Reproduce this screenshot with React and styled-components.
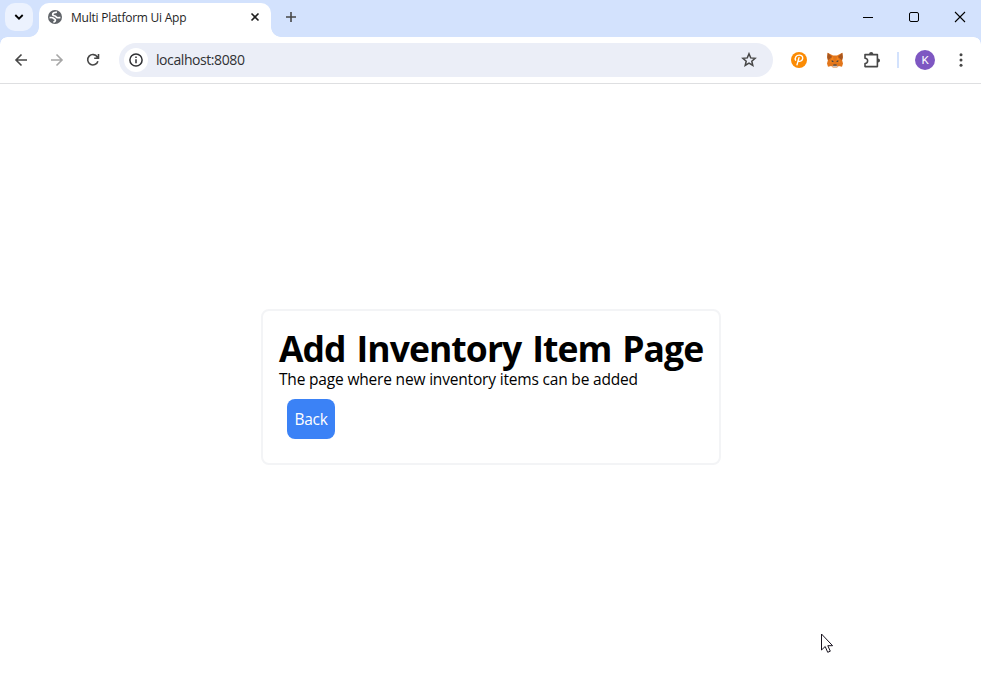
import React from 'react';
import styled, { createGlobalStyle } from 'styled-components';

const GlobalStyle = createGlobalStyle`
  * { box-sizing: border-box; }
  body { margin: 0; background: #fff; overflow: hidden; }
  button { border: 0; padding: 0; background: none; font: inherit; color: inherit; }
  svg { display: block; flex: none; }
`;

const Window = styled.div`
  position: relative;
  display: flex;
  flex-direction: column;
  width: 981px;
  height: 687px;
  background: #fff;
  font-family: "Open Sans", "Noto Sans", sans-serif;
`;

const TabStrip = styled.header`
  display: flex;
  height: 37px;
  flex: none;
  background: #d3e2fd;
`;

const SearchCorner = styled.div`
  width: 39px;
  height: 37px;
  padding: 3px 0 0 5px;
`;

const TabSearch = styled.button`
  display: grid;
  place-items: center;
  width: 28px;
  height: 28px;
  border-radius: 10px;
  background: #ecf2fe;
`;

const Tab = styled.div`
  position: relative;
  display: flex;
  align-items: center;
  width: 232px;
  height: 34px;
  margin-top: 3px;
  padding: 0 10px 6px 9px;
  border-radius: 10px 10px 0 0;
  background: #fff;

  &::before,
  &::after {
    content: "";
    position: absolute;
    bottom: 0;
    width: 10px;
    height: 10px;
  }
  &::before {
    left: -10px;
    background: radial-gradient(circle at 0 0, transparent 9.5px, #fff 10.2px);
  }
  &::after {
    right: -10px;
    background: radial-gradient(circle at 100% 0, transparent 9.5px, #fff 10.2px);
  }
`;

const TabTitle = styled.span`
  flex: 1;
  margin: 2px 0 0 9px;
  font-size: 12px;
  line-height: 16px;
  letter-spacing: -0.24px;
  white-space: nowrap;
  color: #1f1f1f;
`;

const NewTab = styled.button`
  width: 12px;
  height: 12px;
  margin: 11px 0 0 14px;
`;

const WindowButtons = styled.div`
  display: flex;
  gap: 34px;
  height: 12px;
  margin: 11px 15px 0 auto;
`;

const Toolbar = styled.div`
  position: relative;
  display: flex;
  align-items: center;
  height: 47px;
  flex: none;
  padding: 0 12px 0 13px;
  border-bottom: 1px solid #dedfe1;

  &::before,
  &::after {
    content: "";
    position: absolute;
    top: 0;
    width: 7px;
    height: 7px;
  }
  &::before {
    left: 0;
    background: radial-gradient(circle at 100% 100%, transparent 6.4px, #d3e2fd 7px);
  }
  &::after {
    right: 0;
    background: radial-gradient(circle at 0 100%, transparent 6.4px, #d3e2fd 7px);
  }
`;

const Navigation = styled.nav`
  display: flex;
  gap: 20px;
  color: #474747;
`;

const ToolButton = styled.button`
  display: block;
  width: 16px;
  height: 16px;
  color: ${({ $muted }) => ($muted ? '#a6a6a6' : '#474747')};
`;

const AddressBar = styled.div`
  display: flex;
  align-items: center;
  flex: none;
  width: 654px;
  height: 34px;
  margin-left: 18px;
  padding: 0 16px 0 5px;
  border-radius: 17px;
  background: #ebeef7;
  color: #303134;
`;

const SiteInfo = styled.span`
  display: grid;
  place-items: center;
  width: 24px;
  height: 24px;
  border-radius: 50%;
  background: #fff;
`;

const Address = styled.span`
  flex: 1;
  margin-left: 8px;
  font-size: 14px;
  line-height: 20px;
  letter-spacing: -0.42px;
`;

const Extensions = styled.div`
  display: flex;
  align-items: center;
  gap: 20px;
  margin-left: 18px;
`;

const Divider = styled.span`
  flex: none;
  width: 2px;
  height: 16px;
  margin-left: 16px;
  background: #d3e2fd;
`;

const Avatar = styled.span`
  display: grid;
  place-items: center;
  flex: none;
  width: 20px;
  height: 20px;
  margin: 0 18px 0 16px;
  border-radius: 50%;
  background: #7e57c2;
  color: #fff;
  font: 11.5px/20px Roboto, sans-serif;
`;

const Page = styled.main`
  display: flex;
  flex: 1;
  align-items: center;
  justify-content: center;
  padding-top: 3px;
`;

const Card = styled.section`
  width: 460px;
  height: 156px;
  padding: 16px;
  border: 2px solid #f3f4f6;
  border-radius: 8px;
  color: #000;
`;

const Heading = styled.h1`
  height: 40px;
  margin: 0;
  padding-left: 0.5px;
  font-size: 35.5px;
  line-height: 43px;
  font-weight: 700;
  letter-spacing: -0.93px;
  word-spacing: 2.5px;
  white-space: nowrap;
`;

const Description = styled.p`
  margin: 0;
  padding-left: 0.5px;
  font-size: 15.5px;
  line-height: 24px;
  letter-spacing: -0.18px;
  white-space: nowrap;
`;

const BackButton = styled.button`
  display: block;
  width: 48px;
  height: 40px;
  margin: 8px;
  padding-left: 1px;
  border-radius: 8px;
  background: #3b82f6;
  color: #fff;
  font-size: 15.5px;
  line-height: 24px;
  letter-spacing: -0.3px;
  text-align: center;
`;

const Cursor = styled.svg`
  position: absolute;
  left: 821px;
  top: 633px;
`;

const Stroke = ({ d, size = 16, width = 1.6, ...rest }) => (
  <svg width={size} height={size} viewBox={`0 0 ${size} ${size}`} fill="none" stroke="currentColor" strokeWidth={width} {...rest}>
    <path d={d} />
  </svg>
);

const GlobeIcon = () => (
  <svg width="14" height="14" viewBox="0 0 14 14">
    <circle cx="7" cy="7" r="7" fill="#5f6368" />
    <path
      d="M8.9 2.2C6.6 2.4 4.6 3.2 4.7 4.6c.1 1.2 1.5 1 2.5 1.4 1.2.5 1 1.5 2.2 1.7 1.1.2 1.9-.2 3-.1M1.6 7.6c1.5-.2 3.3-.1 4.1.8.7.8 1.6.6 1.7 1.5.1 1-.8 1.9-2 2.2"
      fill="none"
      stroke="#fff"
      strokeWidth="1.7"
    />
  </svg>
);

const InfoIcon = () => (
  <svg width="14" height="14" viewBox="0 0 14 14" fill="none" stroke="currentColor" strokeWidth="1.5">
    <circle cx="7" cy="7" r="6.1" />
    <path d="M7 6.2v4M7 3.5V5" />
  </svg>
);

const PayIcon = () => (
  <svg width="16" height="16" viewBox="0 0 16 16">
    <circle cx="8" cy="8" r="8" fill="#fb8b04" />
    <path d="M4.6 8.2c-1.1-2 .5-5.1 3.6-5.1 2.3 0 3.7 1.4 3.5 3.3-.2 2.1-2 3.3-4.2 2.9M8 5.6 6 12.8" fill="none" stroke="#fff" strokeWidth="1.4" strokeLinecap="round" />
  </svg>
);

const FoxIcon = () => (
  <svg width="16" height="16" viewBox="0 0 16 16">
    <path fill="#e2761b" d="M.7.7 6 3.4h4L15.3.7l.5 4.6-.7 3 .9 3.3-1 3.2-3.2-.8-1.7 1.4H5.9L4.2 14 1 14.8l-1-3.2.9-3.3-.7-3Z" />
    <path fill="#a8561f" d="M.7.7 5.2 5 1 8.3l-.8-3ZM15.3.7 10.8 5 15 8.3l.8-3Z" />
    <path fill="#f6851b" d="m6 4.2.7 5.8-4 .8L5 5.2ZM10 4.2 9.3 10l4 .8L11 5.2Z" />
    <path fill="#233447" d="m4.6 8.3 2 .8-.4.9-1.6-.4ZM11.4 8.3l-2 .8.4.9 1.6-.4ZM6.5 12.4h3l.4 1.3H6.1Z" />
    <path fill="#d7c1b3" d="m4.8 14.1 1.3-.4h3.8l1.3.4-1.1 1.1H5.9Z" />
  </svg>
);

const PuzzleIcon = () => (
  <svg width="18" height="18" viewBox="0 0 18 18">
    <path d="M2 3.6h12.4v12H2v-3.1c3.5 0 3.5-5.3 0-5.3Z" fill="none" stroke="#474747" strokeWidth="1.6" strokeLinejoin="round" />
    <path d="M6.1 3a2.1 2.1 0 0 1 4.2 0ZM15 7.6a2 2 0 0 1 0 4Z" fill="#474747" />
  </svg>
);

const MenuIcon = () => (
  <svg width="16" height="16" viewBox="0 0 16 16" fill="#474747">
    <circle cx="8" cy="2.7" r="1.5" />
    <circle cx="8" cy="8" r="1.5" />
    <circle cx="8" cy="13.3" r="1.5" />
  </svg>
);

export default function App() {
  return (
    <Window>
      <GlobalStyle />
      <TabStrip>
        <SearchCorner>
          <TabSearch aria-label="Search tabs">
            <Stroke size={10} width={1.8} d="m1.3 3 3.7 3.7L8.7 3" />
          </TabSearch>
        </SearchCorner>
        <Tab>
          <GlobeIcon />
          <TabTitle>Multi Platform Ui App</TabTitle>
          <Stroke size={12} width={1.6} color="#1f1f1f" d="m2.5 2.5 7 7m0-7-7 7" />
        </Tab>
        <NewTab aria-label="New tab">
          <Stroke size={12} width={1.6} d="M6 1v10M1 6h10" color="#474747" />
        </NewTab>
        <WindowButtons>
          <Stroke size={12} width={1} d="M1 6.5h10" />
          <Stroke size={12} width={1} d="M3 1.5h6A1.5 1.5 0 0 1 10.5 3v6A1.5 1.5 0 0 1 9 10.5H3A1.5 1.5 0 0 1 1.5 9V3A1.5 1.5 0 0 1 3 1.5Z" />
          <Stroke size={12} width={1.1} d="m1 1 10 10m0-10L1 11" />
        </WindowButtons>
      </TabStrip>
      <Toolbar>
        <Navigation>
          <ToolButton aria-label="Back"><Stroke d="M14 8H3m5.5-5.5L3 8l5.5 5.5" /></ToolButton>
          <ToolButton aria-label="Forward" $muted><Stroke d="M2 8h11M7.5 2.5 13 8l-5.5 5.5" /></ToolButton>
          <ToolButton aria-label="Reload"><Stroke d="M12.9 9.2A5.2 5.2 0 1 1 12.3 5L13.5 6.3M13.5 2v4.3H9.2" /></ToolButton>
        </Navigation>
        <AddressBar>
          <SiteInfo><InfoIcon /></SiteInfo>
          <Address>localhost:8080</Address>
          <Stroke width={1.5} color="#474747" d="m8 1.8 1.7 4.1 4.4.4-3.3 2.9 1 4.3L8 11.2l-3.8 2.3 1-4.3-3.3-2.9 4.4-.4Z" />
        </AddressBar>
        <Extensions>
          <PayIcon />
          <FoxIcon />
          <PuzzleIcon />
        </Extensions>
        <Divider />
        <Avatar>K</Avatar>
        <MenuIcon />
      </Toolbar>
      <Page>
        <Card>
          <Heading>Add Inventory Item Page</Heading>
          <Description>The page where new inventory items can be added</Description>
          <BackButton>Back</BackButton>
        </Card>
      </Page>
      <Cursor width="14" height="22" viewBox="0 0 14 22">
        <path d="M.5 1v16l3.7-3.5 2.5 5.8 2.6-1.1-2.5-5.5h4.8Z" fill="#fff" stroke="#18131f" />
      </Cursor>
    </Window>
  );
}
